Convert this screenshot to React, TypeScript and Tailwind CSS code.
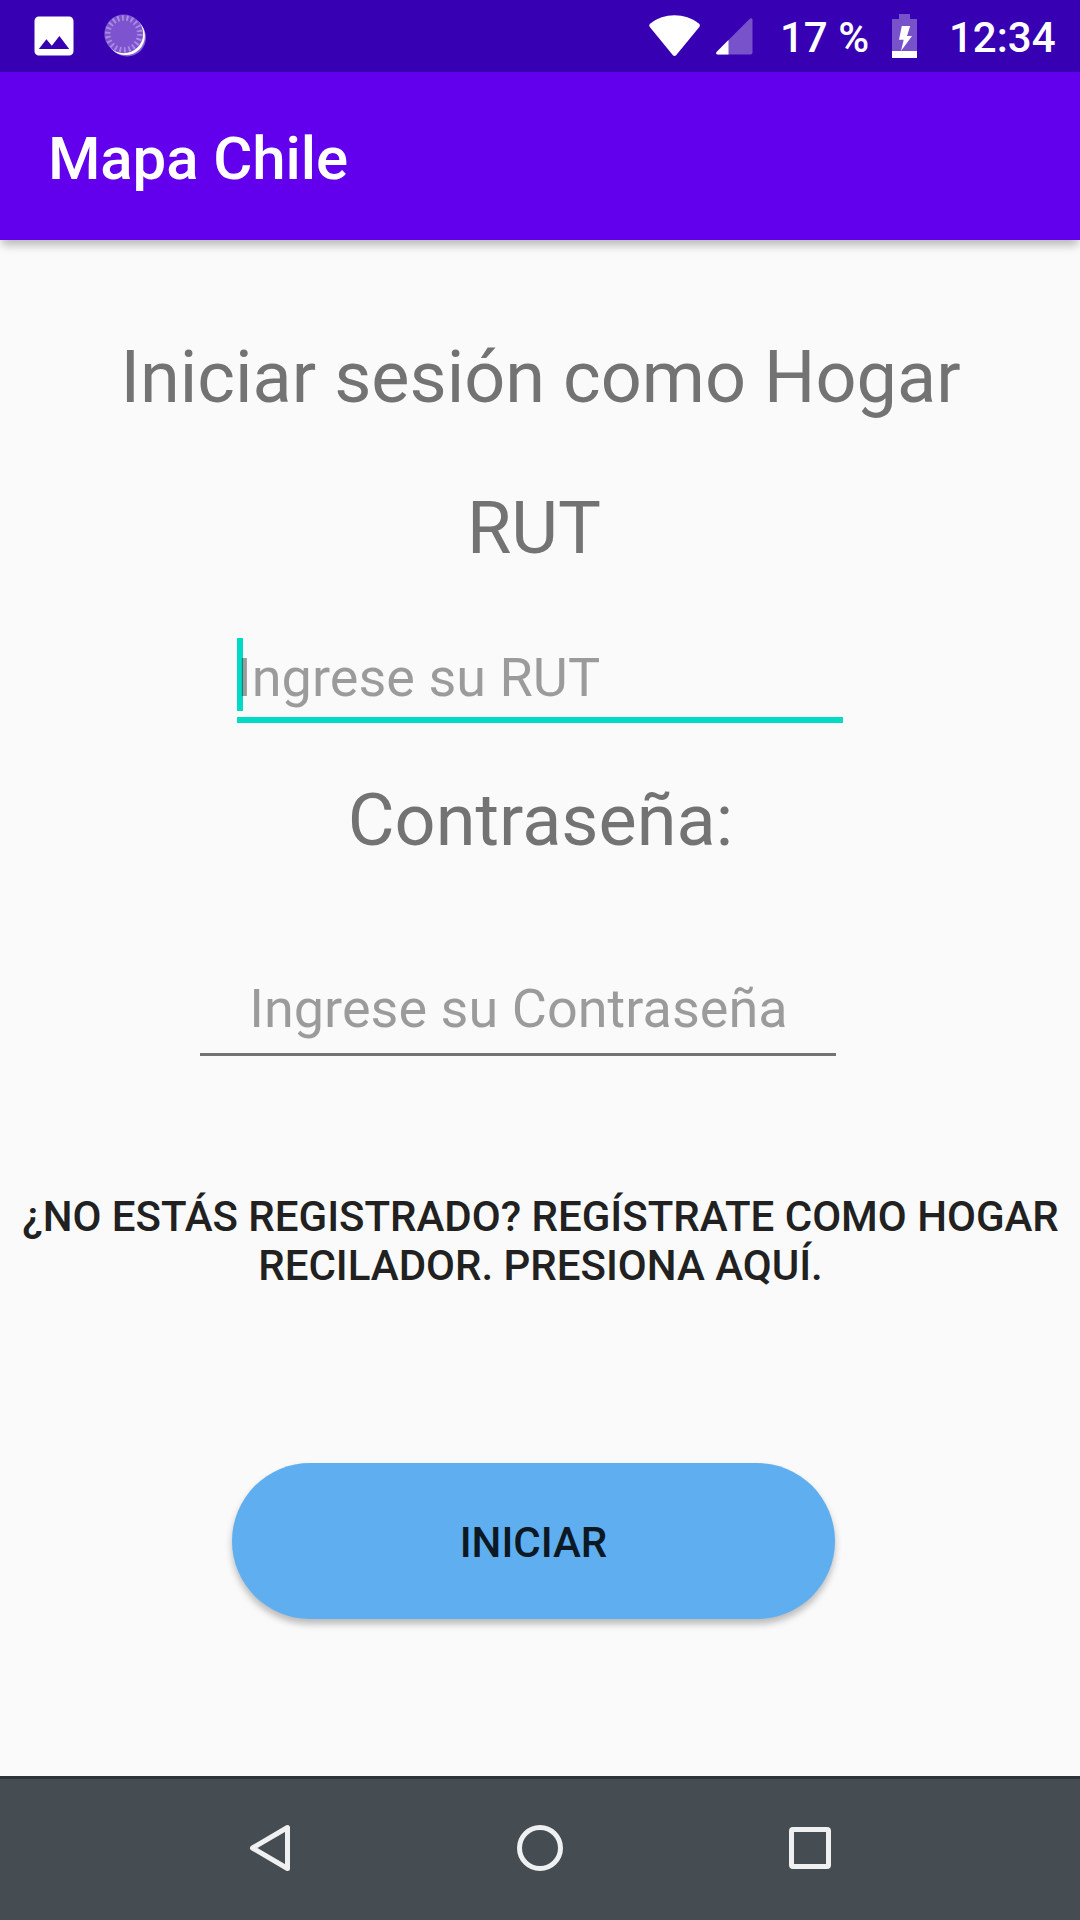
import { useState } from "react";
import { MdImage } from "react-icons/md";

function SyncIcon() {
  return (
    <svg width="46" height="46" viewBox="0 0 46 46" className="ml-[23px]">
      <circle cx="24" cy="24.500" r="19" fill="#8a63d4" />
      <circle cx="22.600" cy="22.800" r="19.300" fill="#fff" />
      <circle cx="20.700" cy="20.900" r="19.400" fill="#7d53cf" />
      <circle cx="20.700" cy="20.900" r="16" fill="none" stroke="#a98ce2" strokeWidth="5.500" strokeDasharray="1.900 2.670" />
    </svg>
  );
}

function WifiIcon() {
  return (
    <svg width="52" height="42" viewBox="0 0 52 42" className="ml-auto">
      <path d="M1.400 8.400C8.600 3 16.500.3 25.500.3S42.500 3 49.800 8.400Q51.800 10 50.300 12L27.100 40.200Q25.500 41.800 23.900 40.200L.8 12Q-.6 10 1.400 8.400z" fill="#fff" />
    </svg>
  );
}

function SignalIcon() {
  return (
    <svg width="37" height="37" viewBox="0 0 37 37" className="ml-[15px]">
      <path d="M33.800.8Q36.500-.8 36.500 2V34.500Q36.500 36.500 34.500 36.500H1.500Q-.8 36 .8 33.800z" fill="#fff" opacity=".32" />
      <path d="M12.500 22V36.500H1.500Q-.8 36 .8 33.800z" fill="#fff" />
    </svg>
  );
}

function BatteryIcon() {
  return (
    <svg width="25" height="44" viewBox="0 0 25 44" className="ml-6">
      <path d="M7 0h11v5h7v32H0V5h7z" fill="#fff" opacity=".32" />
      <path d="M0 37h25v7H0z" fill="#fff" />
      <path d="M9.800 12h8.400l-3.200 10h5L9 37l2.700-11.300H7z" fill="#fff" />
    </svg>
  );
}

export default function App() {
  const [rut, setRut] = useState("");
  const [password, setPassword] = useState("");

  return (
    <div className="flex h-[1920px] w-[1080px] flex-col overflow-hidden bg-[#fafafa] font-['Roboto',sans-serif]">
      {/* Status bar */}
      <div className="flex h-[72px] shrink-0 items-center bg-[#3700b3] pl-7 text-[42px] font-medium text-white">
        <MdImage size={52} />
        <SyncIcon />
        <WifiIcon />
        <SignalIcon />
        <span className="ml-[27px] w-[88px] whitespace-nowrap pt-[2px]">17 %</span>
        <BatteryIcon />
        <span className="ml-8 w-[131px] whitespace-nowrap pt-[2px]">12:34</span>
      </div>

      {/* App bar */}
      <header className="z-10 flex h-[168px] shrink-0 items-center bg-[#6200ee] pl-12 pt-[6px] shadow-[0_7px_9px_-2px_rgba(0,0,0,0.27)]">
        <h1 className="text-[60px] font-medium leading-[70px] tracking-[-0.1px] text-white">Mapa Chile</h1>
      </header>

      <main className="flex flex-1 flex-col text-[#737373]">
        <h2 className="mt-24 pl-[1px] text-center text-[72px] leading-[84px] tracking-[0.03px]">Iniciar sesión como Hogar</h2>

        <label htmlFor="rut" className="mt-[67px] mr-3 text-center text-[72px] leading-[84px]">RUT</label>
        <div className="relative ml-[237px] mt-[67px] w-[606px] border-b-[6px] border-[#03dac5] pb-[6px]">
          <span className="absolute left-0 top-0 h-[73px] w-[6px] bg-[#03dac5]" />
          <input
            id="rut"
            type="text"
            value={rut}
            onChange={(e) => setRut(e.target.value)}
            placeholder="Ingrese su RUT"
            className="relative block h-[73px] w-full bg-transparent pt-[5px] text-[54px] tracking-[0.03px] text-[#212121] outline-none placeholder:text-black/38"
          />
        </div>

        <label htmlFor="password" className="mt-14 pl-[1px] text-center text-[72px] leading-[84px] tracking-[0.05px]">Contraseña:</label>
        <input
          id="password"
          type="password"
          value={password}
          onChange={(e) => setPassword(e.target.value)}
          placeholder="Ingrese su Contraseña"
          className="ml-[200px] mt-[107px] block h-[86px] w-[636px] border-b-[3px] border-[#737373] bg-transparent pb-[6px] pl-[1px] text-center text-[54px] tracking-[0.03px] text-[#212121] outline-none placeholder:text-black/38"
        />

        <button className="mt-[136px] pl-[1px] text-center text-[42px] font-medium uppercase leading-[49px] text-[#212121]">
          ¿No estás registrado? Regístrate como Hogar
          <br />
          Recilador. Presiona aquí.
        </button>

        <button className="ml-[232px] mt-[173px] h-[156px] w-[603px] rounded-full bg-[#5faef0] pt-[2px] text-[42px] font-medium uppercase text-[#0c1823] shadow-[0_5px_7px_rgba(0,0,0,0.26)]">
          Iniciar
        </button>
      </main>

      {/* Navigation bar */}
      <nav className="flex h-36 shrink-0 items-center border-t-[3px] border-[#2c343a] bg-[#454d52] pb-[3px] pl-[248px]">
        <svg width="44" height="50" viewBox="0 0 44 50" fill="none" stroke="#eef0f1" strokeWidth="5" strokeLinejoin="round">
          <path d="M39.500 4.500v41L4.500 25z" />
        </svg>
        <svg width="46" height="50" viewBox="0 0 46 50" fill="none" stroke="#eef0f1" strokeWidth="5" className="ml-[225px]">
          <circle cx="23" cy="25" r="20.500" />
        </svg>
        <svg width="42" height="50" viewBox="0 0 42 50" fill="none" stroke="#eef0f1" strokeWidth="5" className="ml-[226px]">
          <rect x="2.500" y="6.500" width="37" height="37" rx="1.500" />
        </svg>
      </nav>
    </div>
  );
}
